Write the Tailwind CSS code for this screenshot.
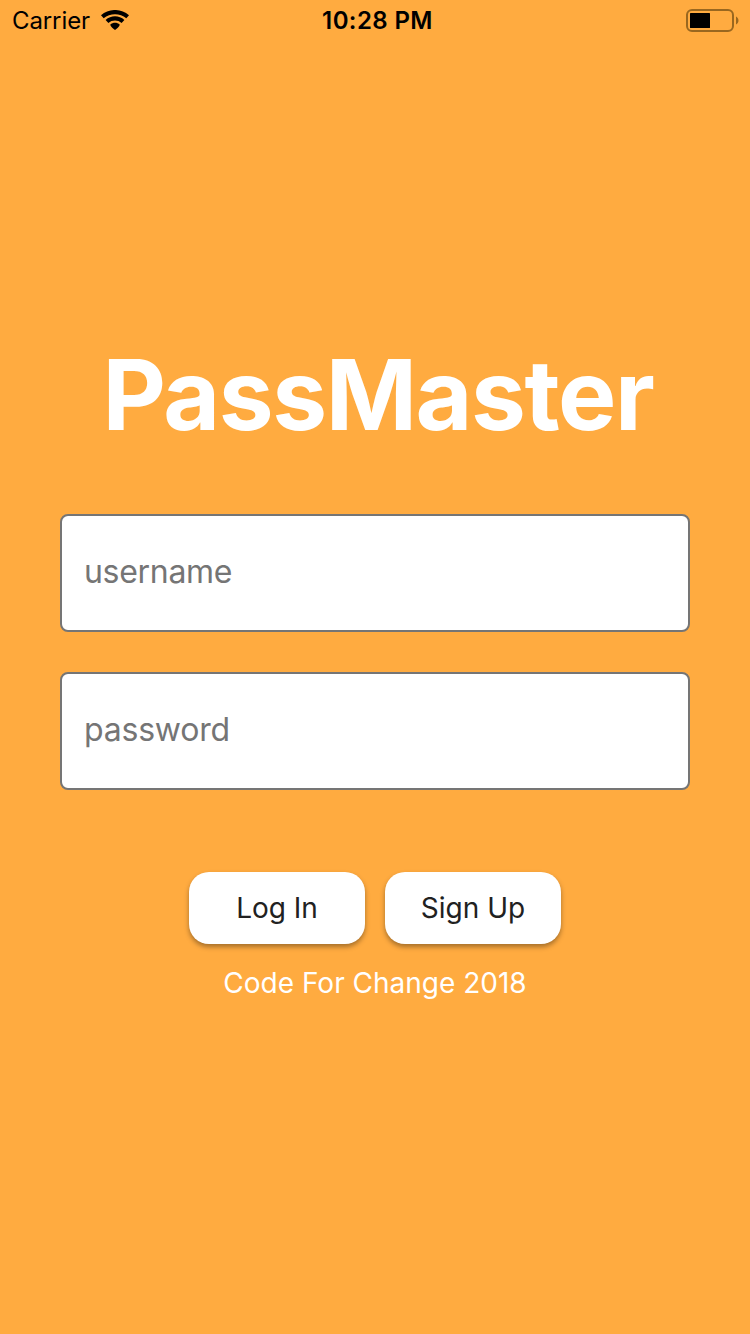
<!DOCTYPE html>
<html lang="en">
<head>
<meta charset="utf-8">
<title>PassMaster</title>
<script src="https://cdn.jsdelivr.net/npm/@tailwindcss/browser@4"></script>
</head>
<body class="flex h-[1334px] w-[750px] flex-col overflow-hidden bg-[#ffab40] font-['Inter',sans-serif]">
<header class="grid h-10 grid-cols-3 items-center pl-3 pr-[11px] text-black">
  <div class="flex items-center gap-[11px]">
    <span class="pt-0.5 text-[24px] leading-[38px] tracking-[-0.1px]">Carrier</span>
    <svg class="h-5 w-7" viewBox="0 0 28 20"><path d="M0 5.3C8-1.8 20-1.8 28 5.3L25.3 8.3C19 2.8 9 2.8 2.7 8.3Z"/><path d="M4.6 10C10 5.1 18 5.1 23.4 10L20.6 13C17 9.7 11 9.7 7.4 13Z"/><path d="M9.2 14.8C12 12.2 16 12.2 18.8 14.8C18.4 16.6 15.5 19 14 20C12.5 19 9.6 16.6 9.2 14.8Z"/></svg>
  </div>
  <span class="pl-1 pt-0.5 text-center text-[24px] font-semibold leading-[38px] tracking-[0.4px] whitespace-nowrap">10:28 PM</span>
  <svg class="h-6 w-[54px] justify-self-end" viewBox="0 0 54 24"><rect x="2" y="2" width="46" height="21" rx="5" fill="none" stroke="#99671f" stroke-width="2"/><rect x="5" y="5" width="20" height="15" rx="0.5"/><path d="M51 8.5C54.3 10 54.3 15 51 16.5Z" fill="#99671f"/></svg>
</header>
<main class="flex flex-col items-center px-[60px] pt-[294px]">
  <h1 class="h-[120px] whitespace-nowrap pl-1.5 text-[98px] font-bold leading-[121px] tracking-[-1.4px] text-white">PassMaster</h1>
  <form class="mt-[60px] flex w-full flex-col gap-10">
    <input type="text" placeholder="username" class="h-[118px] w-full rounded-lg border-2 border-[#757575] bg-white px-[22px] pb-1 text-[32px] tracking-[-0.3px] placeholder:text-[#757575]">
    <input type="password" placeholder="password" class="h-[118px] w-full rounded-lg border-2 border-[#757575] bg-white px-[22px] pb-1 text-[32px] tracking-[-0.2px] placeholder:text-[#757575]">
  </form>
  <div class="mt-[82px] flex gap-5 text-[28px] text-[#212121]">
    <button class="h-[72px] w-44 rounded-[20px] bg-white pb-px shadow-[0_3px_5px_rgba(0,0,0,0.35)]">Log In</button>
    <button class="h-[72px] w-44 rounded-[20px] bg-white pb-px shadow-[0_3px_5px_rgba(0,0,0,0.35)]">Sign Up</button>
  </div>
  <p class="mt-[22px] text-[28px] leading-[34px] text-white">Code For Change 2018</p>
</main>
</body>
</html>
